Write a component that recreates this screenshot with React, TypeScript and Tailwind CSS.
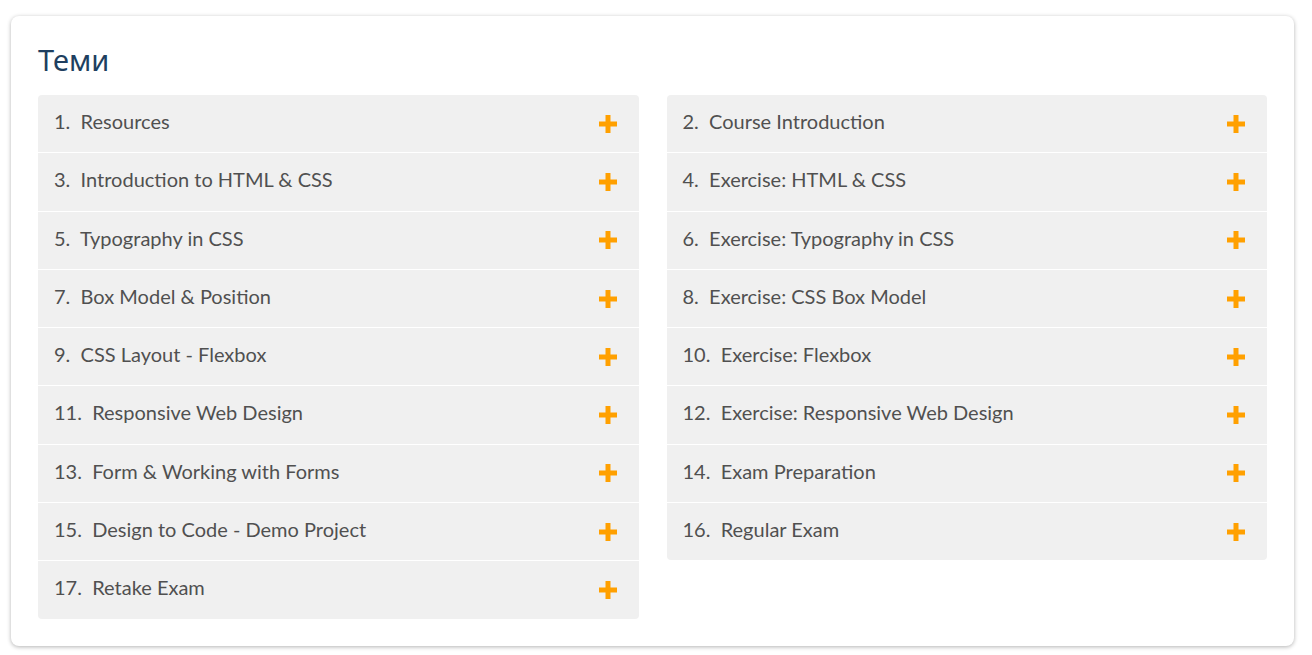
const left = [
  "Resources",
  "Introduction to HTML & CSS",
  "Typography in CSS",
  "Box Model & Position",
  "CSS Layout - Flexbox",
  "Responsive Web Design",
  "Form & Working with Forms",
  "Design to Code - Demo Project",
  "Retake Exam",
];

const right = [
  "Course Introduction",
  "Exercise: HTML & CSS",
  "Exercise: Typography in CSS",
  "Exercise: CSS Box Model",
  "Exercise: Flexbox",
  "Exercise: Responsive Web Design",
  "Exam Preparation",
  "Regular Exam",
];

function PlusIcon() {
  return (
    <svg width="20" height="20" viewBox="0 0 20 20" className="shrink-0">
      <rect x="1" y="7.5" width="18" height="5" fill="#ffa000" />
      <rect x="7.5" y="1" width="5" height="18" fill="#ffa000" />
    </svg>
  );
}

function TopicList({ items, start }: { items: string[]; start: number }) {
  return (
    <div className="flex flex-col gap-px rounded-[4px] overflow-hidden">
      {items.map((title, i) => (
        <div
          key={title}
          className="flex items-center justify-between bg-[#f0f0f0] pl-4 pr-[21px] py-4 leading-[25.3px] text-[20px] text-[#505050]"
        >
          <span className="-mt-[2px] mb-[2px]">
            {start + i * 2}.&nbsp;&nbsp;{title}
          </span>
          <PlusIcon />
        </div>
      ))}
    </div>
  );
}

export default function App() {
  return (
    <div className="min-h-screen bg-white pt-4 pl-[11px] pr-[18px] pb-2" style={{ fontFamily: "Lato, 'Noto Sans', sans-serif" }}>
      <div className="rounded-lg bg-white shadow-[0_1px_4px_rgba(0,0,0,0.3)] px-[27px] pt-[25px] pb-[27px]">
        <h2 className="text-[29px] leading-[37px] text-[#1e3f60] mb-[17px]" style={{ fontFamily: "'Noto Sans', Lato, sans-serif" }}>
          Теми
        </h2>
        <div className="grid grid-cols-2 gap-7 items-start">
          <TopicList items={left} start={1} />
          <TopicList items={right} start={2} />
        </div>
      </div>
    </div>
  );
}
